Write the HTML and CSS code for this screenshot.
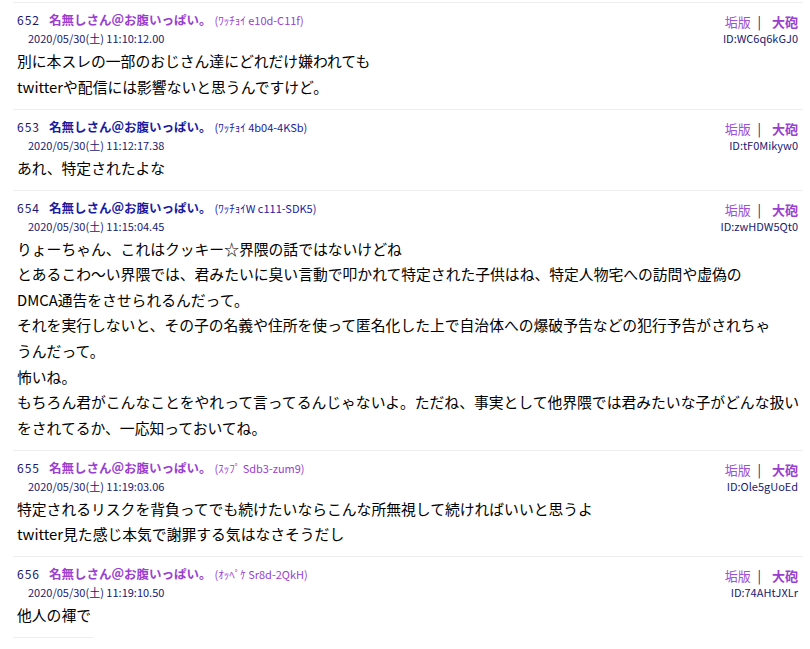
FILE: index.html
```html
<!DOCTYPE html>
<html lang="ja">
<head>
<meta charset="UTF-8">
<title>thread</title>
<link rel="stylesheet" href="styles.css">
</head>
<body>
<div class="thread">

  <div class="post">
    <div class="head">
      <div><span class="num">652</span><b class="name visited">名無しさん＠お腹いっぱい。</b><span class="trip visited">(ﾜｯﾁｮｲ e10d-C11f)</span></div>
      <div class="tools"><span class="ak">垢版</span> | <b class="ho">大砲</b></div>
    </div>
    <div class="meta">
      <span class="date">2020/05/30(土) 11:10:12.00</span>
      <span class="uid">ID:WC6q6kGJ0</span>
    </div>
    <div class="msg">別に本スレの一部のおじさん達にどれだけ嫌われても<br>twitterや配信には影響ないと思うんですけど。</div>
  </div>

  <div class="post">
    <div class="head">
      <div><span class="num">653</span><b class="name">名無しさん＠お腹いっぱい。</b><span class="trip">(ﾜｯﾁｮｲ 4b04-4KSb)</span></div>
      <div class="tools"><span class="ak">垢版</span> | <b class="ho">大砲</b></div>
    </div>
    <div class="meta">
      <span class="date">2020/05/30(土) 11:12:17.38</span>
      <span class="uid">ID:tF0Mikyw0</span>
    </div>
    <div class="msg">あれ、特定されたよな</div>
  </div>

  <div class="post">
    <div class="head">
      <div><span class="num">654</span><b class="name">名無しさん＠お腹いっぱい。</b><span class="trip">(ﾜｯﾁｮｲW c111-SDK5)</span></div>
      <div class="tools"><span class="ak">垢版</span> | <b class="ho">大砲</b></div>
    </div>
    <div class="meta">
      <span class="date">2020/05/30(土) 11:15:04.45</span>
      <span class="uid">ID:zwHDW5Qt0</span>
    </div>
    <div class="msg">りょーちゃん、これはクッキー☆界隈の話ではないけどね<br>とあるこわ～い界隈では、君みたいに臭い言動で叩かれて特定された子供はね、特定人物宅への訪問や虚偽の<br>DMCA通告をさせられるんだって。<br>それを実行しないと、その子の名義や住所を使って匿名化した上で自治体への爆破予告などの犯行予告がされちゃ<br>うんだって。<br>怖いね。<br>もちろん君がこんなことをやれって言ってるんじゃないよ。ただね、事実として他界隈では君みたいな子がどんな扱い<br>をされてるか、一応知っておいてね。</div>
  </div>

  <div class="post">
    <div class="head">
      <div><span class="num">655</span><b class="name visited">名無しさん＠お腹いっぱい。</b><span class="trip visited">(ｽｯﾌﾟ Sdb3-zum9)</span></div>
      <div class="tools"><span class="ak">垢版</span> | <b class="ho">大砲</b></div>
    </div>
    <div class="meta">
      <span class="date">2020/05/30(土) 11:19:03.06</span>
      <span class="uid">ID:Ole5gUoEd</span>
    </div>
    <div class="msg">特定されるリスクを背負ってでも続けたいならこんな所無視して続ければいいと思うよ<br>twitter見た感じ本気で謝罪する気はなさそうだし</div>
  </div>

  <div class="post">
    <div class="head">
      <div><span class="num">656</span><b class="name visited">名無しさん＠お腹いっぱい。</b><span class="trip visited">(ｵｯﾍﾟｹ Sr8d-2QkH)</span></div>
      <div class="tools"><span class="ak">垢版</span> | <b class="ho">大砲</b></div>
    </div>
    <div class="meta">
      <span class="date">2020/05/30(土) 11:19:10.50</span>
      <span class="uid">ID:74AHtJXLr</span>
    </div>
    <div class="msg">他人の褌で</div>
  </div>

  <div class="end"></div>
</div>
</body>
</html>
```

FILE: styles.css
```css
*{
    margin: 0;
    padding: 0;
}
body{
    background: #fff;
    font-family: "Noto Sans CJK JP", "Noto Sans", sans-serif;
    color: #000;
}
.thread{
    padding: 2px 7px 0 13px;
}
.post{
    border-top: 1px solid #eeeeee;
    padding: 8px 5px 9.4px 4px;
}
.head, .meta{
    display: flex;
    justify-content: space-between;
    align-items: flex-end;
}
.head{
    height: 18px;
    line-height: 18px;
}
.num{
    font-size: 12px;
    color: #191970;
    letter-spacing: 1px;
    margin-right: 9px;
}
.name{
    font-size: 12.5px;
    color: #1a1aa0;
    margin-right: 3px;
}
.trip{
    font-size: 11px;
    color: #1a1aa0;
}
.visited{
    color: #9a40d0;
}
.tools{
    font-size: 13px;
    line-height: 14px;
    color: #191970;
}
.ak{
    color: #a050d0;
    margin-right: 4px;
}
.ho{
    color: #9a40d0;
    margin-left: 8px;
}
.meta{
    height: 19px;
    line-height: 19px;
    font-size: 11px;
    color: #191970;
}
.date{
    margin-left: 11px;
}
.msg{
    font-size: 14.8px;
    line-height: 25.6px;
    white-space: nowrap;
}
.end{
    width: 80px;
    border-top: 1px solid #eeeeee;
}
```
